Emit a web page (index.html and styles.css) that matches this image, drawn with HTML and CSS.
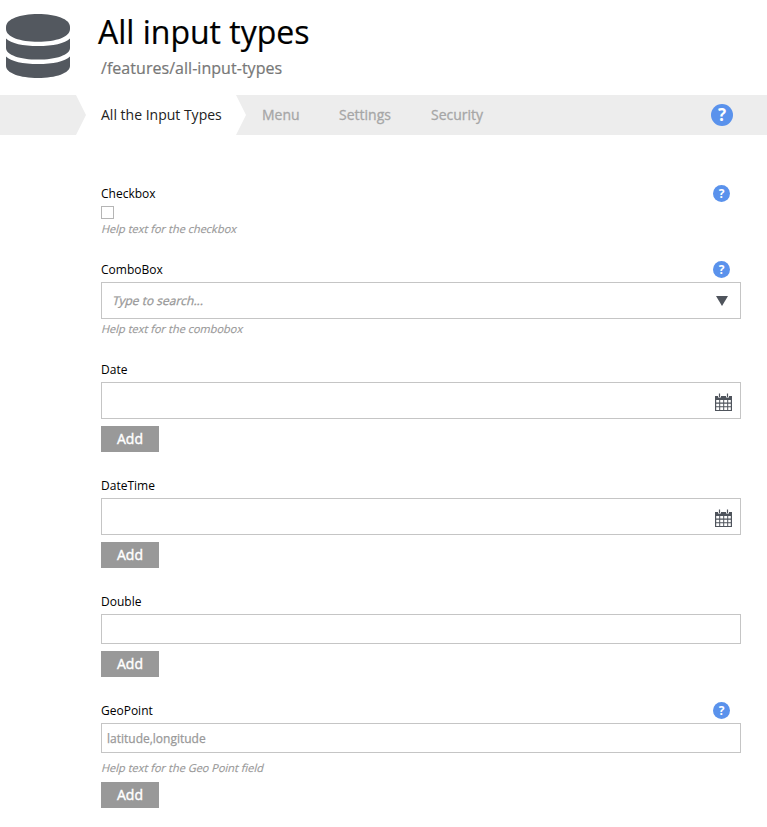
FILE: index.html
```html
<!DOCTYPE html>
<html lang="en">
<head>
<meta charset="utf-8">
<title>All input types</title>
<link rel="stylesheet" href="styles.css">
</head>
<body>
<svg width="0" height="0" class="defs">
  <symbol id="calendar" viewBox="0 0 18 20">
    <path fill="#4f545c" fill-rule="evenodd" d="M0 4h17v15H0zM1.200 8v2.600h3V8zM5.200 8v2.600h3V8zM9.200 8v2.600h3V8zM13.200 8v2.600h2.600V8zM1.200 11.700v2.600h3v-2.600zM5.200 11.700v2.600h3v-2.600zM9.200 11.700v2.600h3v-2.600zM13.200 11.700v2.600h2.600v-2.600zM1.200 15.300v2.600h3v-2.600zM5.200 15.300v2.600h3v-2.600zM9.200 15.300v2.600h3v-2.600zM13.200 15.300v2.600h2.600v-2.600z"/>
    <path stroke="#fff" stroke-width="3" d="M4.500 2v3.500M12.500 2v3.500"/>
    <path stroke="#4f545c" stroke-width="1.2" d="M4.500 1.500v3.500M12.500 1.500v3.500"/>
  </symbol>
</svg>
<header class="header">
  <svg class="logo" width="64" height="64" viewBox="0 0 64 64" fill="#53585f">
    <path d="M0 13C0 5 14 0 32 0s32 5 32 13v2C64 23 50 27.800 32 27.800S0 23 0 15z"/>
    <path d="M0 24.500C5 29.500 17 32 32 32s27-2.500 32-7.500V34c0 7-14 11.600-32 11.600S0 41 0 34z"/>
    <path d="M0 42.500C5 47.500 17 50 32 50s27-2.500 32-7.500V52c0 7-14 12-32 12S0 59 0 52z"/>
  </svg>
  <div>
    <h1 class="title">All input types</h1>
    <div class="path">/features/all-input-types</div>
  </div>
</header>
<nav class="tabs">
  <div class="tab active">All the Input Types</div>
  <div class="tab menu">Menu</div>
  <div class="tab settings">Settings</div>
  <div class="tab">Security</div>
  <span class="help-icon large">?</span>
</nav>
<main class="form">
  <section class="field">
    <div class="label-row"><label>Checkbox</label><span class="help-icon">?</span></div>
    <div class="checkbox"></div>
    <div class="help">Help text for the checkbox</div>
  </section>
  <section class="field">
    <div class="label-row"><label>ComboBox</label><span class="help-icon">?</span></div>
    <div class="input tall combo"><span class="placeholder">Type to search...</span>
      <svg width="12" height="10" viewBox="0 0 12 10"><path fill="#4f545c" d="M0 0h12L6 10z"/></svg>
    </div>
    <div class="help">Help text for the combobox</div>
  </section>
  <section class="field repeat">
    <div class="label-row"><label>Date</label></div>
    <div class="input tall date"><svg width="18" height="20"><use href="#calendar"/></svg></div>
    <div class="add">Add</div>
  </section>
  <section class="field repeat">
    <div class="label-row"><label>DateTime</label></div>
    <div class="input tall date"><svg width="18" height="20"><use href="#calendar"/></svg></div>
    <div class="add">Add</div>
  </section>
  <section class="field repeat">
    <div class="label-row"><label>Double</label></div>
    <div class="input"></div>
    <div class="add">Add</div>
  </section>
  <section class="field geo">
    <div class="label-row"><label>GeoPoint</label><span class="help-icon">?</span></div>
    <div class="input"><span class="hint">latitude,longitude</span></div>
    <div class="help">Help text for the Geo Point field</div>
    <div class="add">Add</div>
  </section>
</main>
</body>
</html>
```
FILE: styles.css
```css
* { box-sizing: border-box; }
body { margin: 0; height: 827px; overflow: hidden; background: #fff; color: #000; font-family: "Open Sans", sans-serif; }
.defs { display: block; }
.header { display: flex; height: 95px; padding: 14px 0 0 6px; }
.logo { flex: none; margin-right: 28px; }
.title { margin: -4px 0 0; font-size: 32px; line-height: 44px; font-weight: 400; white-space: nowrap; -webkit-text-stroke: 0.2px #000; }
.path { margin: 3px 0 0 3px; font-size: 16px; line-height: 22px; color: #777; letter-spacing: 0.04px; -webkit-text-stroke: 0.2px #777; }
.tabs { display: flex; align-items: center; height: 40px; padding: 0 34px 0 76px; background: #ededed; font-size: 14px; line-height: 40px; }
.tab { color: #a6a6a6; -webkit-text-stroke: 0.3px #a6a6a6; white-space: nowrap; }
.active { width: 170px; padding-left: 25px; margin-right: 16px; color: #222; -webkit-text-stroke: 0; background: #fff; clip-path: polygon(0 0, 160px 0, 100% 50%, 160px 100%, 0 100%, 10px 50%); }
.menu { width: 77px; }
.settings { width: 92px; }
.help-icon { display: flex; align-items: center; justify-content: center; width: 17px; height: 17px; margin-left: auto; border-radius: 50%; background: #5a92ec; color: #fff; font-size: 12px; line-height: 17px; font-weight: 700; }
.large { width: 22px; height: 22px; font-size: 17px; line-height: 22px; }
.form { width: 640px; margin: 49px 0 0 101px; }
.field { margin-bottom: 23px; }
.repeat { margin-bottom: 24px; }
.label-row { display: flex; align-items: center; height: 19px; margin-bottom: 3px; padding-right: 11px; font-size: 12px; line-height: 19px; }
.checkbox { width: 13px; height: 13px; border: 1px solid #b5b5b5; }
.help { width: fit-content; height: 16px; margin: 2px 0 0 1px; font-size: 11px; line-height: 16px; color: #999; -webkit-text-stroke: 0.15px #999; transform: skewX(-14deg); }
.input { display: flex; align-items: center; height: 30px; padding: 0 5px; border: 1px solid #c5c5c5; font-size: 12px; color: #999; }
.tall { height: 37px; }
.combo { justify-content: space-between; padding: 0 12px 0 11px; }
.placeholder { -webkit-text-stroke: 0.3px #999; transform: skewX(-14deg); }
.hint { -webkit-text-stroke: 0.25px #999; }
.date { justify-content: flex-end; padding: 3px 7px 0 0; }
.add { width: 58px; height: 26px; margin-top: 7px; background: #999; color: #fff; -webkit-text-stroke: 0.4px #fff; font-size: 14px; line-height: 26px; text-align: center; }
.geo .help { margin-top: 7px; }
.geo .add { margin-top: 6px; }
```
